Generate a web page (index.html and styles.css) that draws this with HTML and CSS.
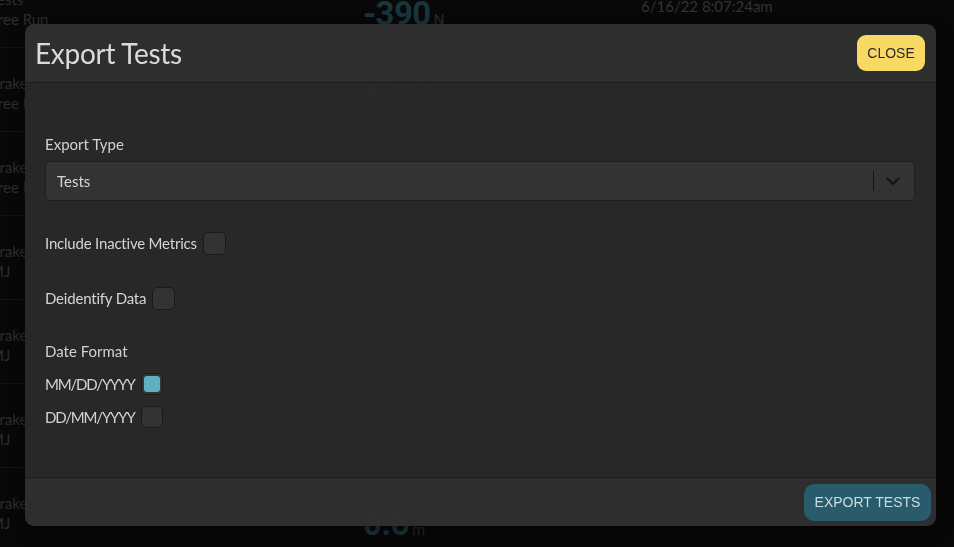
FILE: index.html
```html
<!DOCTYPE html>
<html lang="en">
<head>
<meta charset="utf-8">
<title>Export Tests</title>
<link rel="stylesheet" href="styles.css">
</head>
<body>
<div class="page">
  <div class="list">
    <div class="row"><div class="r1">Tests</div><div class="r2">Free Run</div></div>
    <div class="row"><div class="r1">Brake Test</div><div class="r2">Free Run</div></div>
    <div class="row"><div class="r1">Brake Test</div><div class="r2">Free Run</div></div>
    <div class="row"><div class="r1">Brake Test</div><div class="r2">MJ</div></div>
    <div class="row"><div class="r1">Brake Test</div><div class="r2">MJ</div></div>
    <div class="row"><div class="r1">Brake Test</div><div class="r2">MJ</div></div>
    <div class="row"><div class="r1">Brake Test</div><div class="r2">MJ</div></div>
  </div>
  <div class="metrics">
    <div class="metric"><div class="m-label">Peak Force</div><div class="m-val">-390<span class="unit">N</span></div></div>
    <div class="metric"><div class="m-label">Peak Power</div><div class="m-val">1132<span class="unit">W</span></div></div>
    <div class="metric"><div class="m-label">Duration</div><div class="m-val">70<span class="unit">s</span></div></div>
    <div class="metric"><div class="m-label">Braking Time</div><div class="m-val">0.6<span class="unit">s</span></div></div>
    <div class="metric"><div class="m-label">Braking Time</div><div class="m-val">0.6<span class="unit">s</span></div></div>
    <div class="metric"><div class="m-label">Braking Depth</div><div class="m-val">0.33<span class="unit">m</span></div></div>
    <div class="metric"><div class="m-label">Jump Height</div><div class="m-val">0.6<span class="unit">m</span></div></div>
  </div>
  <div class="date">6/16/22 8:07:24am</div>
</div>

<div class="overlay">
  <div class="modal">
    <div class="modal-head">
      <h1 class="title">Export Tests</h1>
      <button class="btn btn-close">CLOSE</button>
    </div>
    <div class="modal-body">
      <div class="field">
        <div class="label">Export Type</div>
        <div class="select">
          <span class="select-value">Tests</span>
          <span class="select-sep"></span>
          <svg class="chevron" width="14" height="9" viewBox="0 0 14 9"><path d="M1.5 1.5 L7 7 L12.5 1.5" fill="none" stroke="#141414" stroke-width="2" stroke-linecap="round" stroke-linejoin="round"/></svg>
        </div>
      </div>
      <div class="check-row first"><span class="ctext">Include Inactive Metrics</span><span class="box"></span></div>
      <div class="check-row"><span class="ctext">Deidentify Data</span><span class="box"></span></div>
      <div class="label date-label">Date Format</div>
      <div class="check-row opt opt1"><span class="ctext">MM/DD/YYYY</span><span class="box small checked"><span class="fill"></span></span></div>
      <div class="check-row opt opt2"><span class="ctext">DD/MM/YYYY</span><span class="box small"></span></div>
    </div>
    <div class="modal-foot">
      <button class="btn btn-export">EXPORT TESTS</button>
    </div>
  </div>
</div>
</body>
</html>
```

FILE: styles.css
```css
* { box-sizing: border-box; }
html, body { margin: 0; padding: 0; }
body {
  width: 954px;
  height: 547px;
  overflow: hidden;
  background: #080808;
  font-family: "Lato", "Noto Sans", sans-serif;
}

/* background page (dimmed behind the modal) */
.page {
  display: flex;
  height: 547px;
  overflow: hidden;
}
.list {
  width: 300px;
  margin-left: -10px;
  margin-top: -37px;
  flex: none;
}
.row {
  border-top: 1px solid #121212;
  padding: 25px 0 18px;
  height: 84px;
  font-size: 15px;
  line-height: 20px;
  color: #2e2e2e;
}
.metrics {
  width: 270px;
  margin-left: 73px;
  margin-top: -36px;
  flex: none;
}
.metric {
  height: 85px;
  padding-top: 8px;
}
.m-label {
  font-size: 14px;
  line-height: 20px;
  color: #262626;
}
.m-val {
  font-family: "Roboto", "Liberation Sans", sans-serif;
  font-weight: 700;
  font-size: 33px;
  line-height: 44px;
  color: #1a353c;
  letter-spacing: -0.5px;
}
.unit {
  font-size: 15px;
  font-weight: 400;
  margin-left: 3px;
  color: #2a2a2a;
  letter-spacing: 0;
}
.date {
  margin-left: 8px;
  margin-top: -4px;
  font-size: 15px;
  line-height: 20px;
  color: #333333;
  flex: none;
}

/* modal */
.overlay {
  position: fixed;
  inset: 0;
  padding: 24px 18px 21px 25px;
  display: flex;
}
.modal {
  flex: 1;
  display: flex;
  flex-direction: column;
  border-radius: 9px;
  overflow: hidden;
  box-shadow: 0 4px 16px rgba(0,0,0,0.5);
}
.modal-head {
  height: 59px;
  background: rgba(48, 48, 48, 0.97);
  border-bottom: 1px solid #1c1c1c;
  display: flex;
  align-items: center;
  justify-content: space-between;
  padding: 0 11px 0 10px;
}
.title {
  margin: 0;
  font-weight: 400;
  font-size: 28px;
  color: #dadada;
  letter-spacing: -0.3px;
}
.btn {
  border: none;
  font-family: "Liberation Sans", Arial, sans-serif;
  cursor: pointer;
}
.btn-close {
  width: 68px;
  height: 36px;
  border-radius: 9px;
  background: #f8d964;
  color: #2a2a2a;
  font-size: 14px;
  padding: 0;
}
.modal-body {
  flex: 1;
  background: rgba(41, 41, 41, 0.97);
  padding: 50px 21px 0 20px;
  color: #d4d4d4;
  font-size: 15px;
}
.label {
  line-height: 22px;
  color: #d2d2d2;
}
.select {
  margin-top: 6px;
  height: 40px;
  background: #333333;
  border: 1px solid #1e1e1e;
  border-radius: 4px;
  display: flex;
  align-items: center;
  padding: 0 14px 0 11px;
}
.select-value {
  flex: 1;
  color: #d6d6d6;
}
.select-sep {
  width: 1px;
  height: 20px;
  background: #141414;
  margin-right: 12px;
}
.check-row {
  display: flex;
  align-items: center;
  gap: 6px;
  height: 24px;
  color: #d4d4d4;
}
.ctext { letter-spacing: -0.2px; }
.check-row.first { margin-top: 30px; }
.check-row + .check-row { margin-top: 31px; }
.date-label { margin-top: 30px; }
.check-row.opt1 { margin-top: 10px; }
.check-row.opt1 + .check-row.opt2 { margin-top: 9px; }
.opt .ctext { letter-spacing: -1.2px; }
.box {
  width: 23px;
  height: 23px;
  border-radius: 5px;
  background: #333333;
  border: 1px solid #1a1a1a;
  display: flex;
  align-items: center;
  justify-content: center;
  flex: none;
}
.box.small { width: 22px; height: 22px; }
.fill {
  width: 16px;
  height: 16px;
  border-radius: 3px;
  background: #5fafc1;
}
.modal-foot {
  height: 49px;
  background: rgba(48, 48, 48, 0.97);
  border-top: 1px solid #1c1c1c;
  display: flex;
  align-items: center;
  justify-content: flex-end;
  padding: 0 5px 0 0;
}
.btn-export {
  width: 127px;
  height: 37px;
  border-radius: 10px;
  background: #285b6b;
  color: #c9dde2;
  font-size: 14px;
  padding: 0;
}
```
